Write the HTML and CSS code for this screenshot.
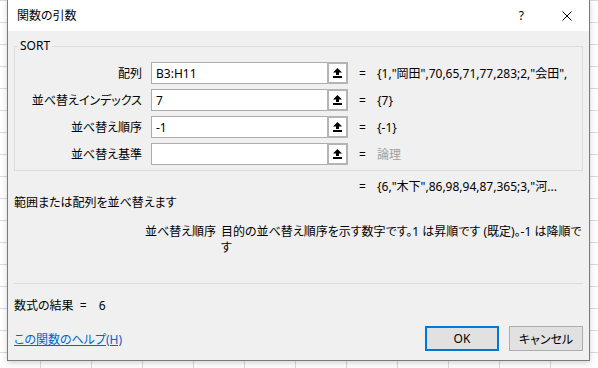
FILE: index.html
```html
<!DOCTYPE html>
<html lang="ja">
<head>
    <meta charset="UTF-8">
    <title>関数の引数</title>
    <link rel="stylesheet" href="styles.css">
</head>
<body>

    <div class="dialog">

        <div class="titlebar">
            <span class="title">関数の引数</span>
            <span class="help">?</span>
            <svg class="close" width="10" height="10" viewBox="0 0 10 10">
                <path d="M0.5 0.5 L9.5 9.5 M9.5 0.5 L0.5 9.5" stroke="#000" stroke-width="1" fill="none" />
            </svg>
        </div>

        <fieldset class="args">
            <legend>SORT</legend>

            <div class="arg-row">
                <span class="arg-name">配列</span>
                <input class="arg-input" type="text" value="B3:H11">
                <span class="ref-btn"><svg width="9" height="10" viewBox="0 0 9 10"><path d="M4.5 0 L9 4.5 L6 4.5 L6 7 L3 7 L3 4.5 L0 4.5 Z M0 8 H9 V10 H0 Z" fill="#000" /></svg></span>
                <span class="eq">=</span>
                <span class="arg-value">{1,"岡田",70,65,71,77,283;2,"会田",</span>
            </div>

            <div class="arg-row">
                <span class="arg-name">並べ替えインデックス</span>
                <input class="arg-input" type="text" value="7">
                <span class="ref-btn"><svg width="9" height="10" viewBox="0 0 9 10"><path d="M4.5 0 L9 4.5 L6 4.5 L6 7 L3 7 L3 4.5 L0 4.5 Z M0 8 H9 V10 H0 Z" fill="#000" /></svg></span>
                <span class="eq">=</span>
                <span class="arg-value">{7}</span>
            </div>

            <div class="arg-row">
                <span class="arg-name">並べ替え順序</span>
                <input class="arg-input" type="text" value="-1">
                <span class="ref-btn"><svg width="9" height="10" viewBox="0 0 9 10"><path d="M4.5 0 L9 4.5 L6 4.5 L6 7 L3 7 L3 4.5 L0 4.5 Z M0 8 H9 V10 H0 Z" fill="#000" /></svg></span>
                <span class="eq">=</span>
                <span class="arg-value">{-1}</span>
            </div>

            <div class="arg-row">
                <span class="arg-name">並べ替え基準</span>
                <input class="arg-input" type="text" value="">
                <span class="ref-btn"><svg width="9" height="10" viewBox="0 0 9 10"><path d="M4.5 0 L9 4.5 L6 4.5 L6 7 L3 7 L3 4.5 L0 4.5 Z M0 8 H9 V10 H0 Z" fill="#000" /></svg></span>
                <span class="eq">=</span>
                <span class="arg-value muted">論理</span>
            </div>
        </fieldset>

        <div class="result-row">
            <span class="eq">=</span>
            <span class="arg-value">{6,"木下",86,98,94,87,365;3,"河...</span>
        </div>

        <p class="summary">範囲または配列を並べ替えます</p>

        <div class="arg-help">
            <span class="arg-help-name">並べ替え順序</span>
            <span class="arg-help-text">目的の並べ替え順序を示す数字です。1 は昇順です (既定)。-1 は降順で<br>す</span>
        </div>

        <div class="sep"></div>

        <div class="formula-result">
            <span>数式の結果</span>
            <span class="fr-eq">=</span>
            <span class="fr-val">6</span>
        </div>

        <div class="footer">
            <a class="help-link" href="#">この関数のヘルプ(H)</a>
            <button class="btn btn-ok" type="button">OK</button>
            <button class="btn" type="button">キャンセル</button>
        </div>

    </div>

</body>
</html>
```

FILE: styles.css
```css
/* Excel sheet behind the dialog */
body {
    margin: 0;
    width: 598px;
    height: 368px;
    overflow: hidden;
    background-color: #fff;
    background-image:
        linear-gradient(#dadada 1px, transparent 1px),
        linear-gradient(90deg, #dadada 1px, transparent 1px);
    background-size: 51px 22px;
    background-position: 40px 0;
    font-family: "Noto Sans", "Noto Sans CJK JP", sans-serif;
    font-size: 12px;
    color: #000;
}

.dialog {
    position: absolute;
    left: 7px;
    top: -1px;
    width: 581px;
    height: 360px;
    border: 1px solid #7a7a7a;
    background: #f0f0f0;
    box-shadow: 0 2px 6px rgba(0, 0, 0, 0.18);
    font-feature-settings: "palt";
}

/* title bar */
.titlebar {
    height: 31px;
    background: #fff;
    display: flex;
    align-items: center;
    padding: 0 17px 0 9px;
}

.titlebar .title {
    flex: 1;
    line-height: 16px;
}

.titlebar .help {
    margin-right: 38px;
    font-size: 12px;
}

.titlebar .close {
    display: block;
}

/* argument box */
.args {
    margin: 7px 6px 0 6px;
    padding: 8px 0 5px 0;
    border: 1px solid #dcdcdc;
    min-width: 0;
}

.args legend {
    margin-left: 3px;
    padding: 0 2px;
    line-height: 16px;
}

.arg-row {
    display: flex;
    align-items: center;
    height: 22px;
    margin-bottom: 5px;
}

.arg-row:last-child {
    margin-bottom: 0;
}

.arg-name {
    width: 127px;
    margin-right: 9px;
    text-align: right;
    white-space: nowrap;
}

.arg-input {
    box-sizing: border-box;
    width: 176px;
    height: 22px;
    margin: 0;
    padding: 0 4px;
    border: 1px solid #acacac;
    border-right: none;
    background: #fff;
    font: inherit;
    color: #000;
    outline: none;
}

.ref-btn {
    box-sizing: border-box;
    width: 21px;
    height: 22px;
    border: 2px solid #b4b4b4;
    background: #fff;
    display: flex;
    align-items: center;
    justify-content: center;
}

.ref-btn svg {
    display: block;
}

.eq {
    box-sizing: border-box;
    width: 29px;
    padding-left: 11px;
    flex-shrink: 0;
}

.arg-value {
    flex: 1;
    white-space: nowrap;
    overflow: hidden;
}

.muted {
    color: #a0a0a0;
}

/* result and description */
.result-row {
    display: flex;
    line-height: 16px;
    margin-top: 8px;
    padding-left: 340px;
}

.summary {
    margin: 0;
    padding-left: 6px;
    line-height: 16px;
}

.arg-help {
    display: flex;
    height: 59px;
    margin-top: 13px;
    padding-left: 137px;
    line-height: 16px;
}

.arg-help-name {
    width: 76px;
    white-space: nowrap;
}

.arg-help-text {
    width: 362px;
    white-space: nowrap;
}

.sep {
    height: 1px;
    margin: 0 6px;
    background: #dcdcdc;
}

.formula-result {
    margin-top: 14px;
    padding-left: 6px;
    line-height: 16px;
}

.fr-eq {
    margin-left: 3px;
}

.fr-val {
    margin-left: 9px;
}

/* footer */
.footer {
    display: flex;
    align-items: center;
    margin-top: 12px;
    padding: 0 6px;
}

.help-link {
    flex: 1;
    color: #0066cc;
    text-decoration: underline;
}

.btn {
    box-sizing: border-box;
    width: 74px;
    height: 25px;
    margin: 0 0 0 10px;
    padding: 0;
    border: 1px solid #adadad;
    background: #e1e1e1;
    font: inherit;
    color: #000;
}

.btn-ok {
    border: 2px solid #0078d7;
}
```
